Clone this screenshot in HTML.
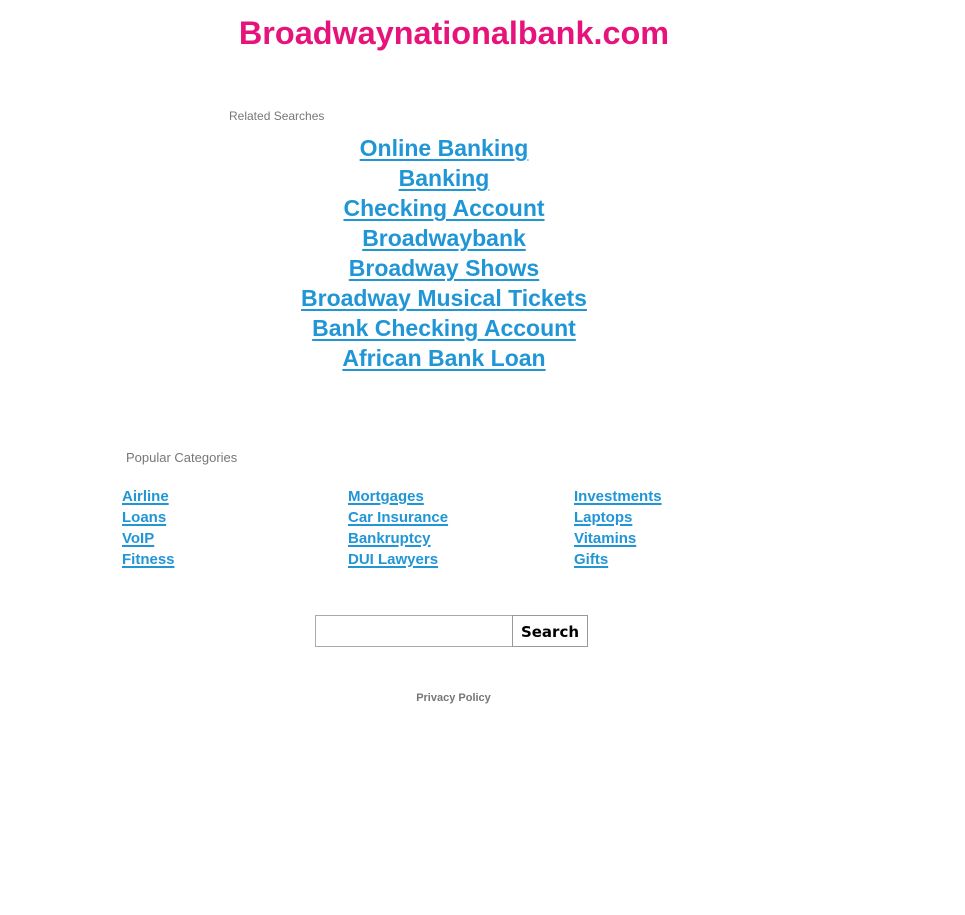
<!DOCTYPE html>
<html><head><meta charset="utf-8"><style>
body{margin:0;background:#fff;font-family:"Liberation Sans",Arial,sans-serif;width:965px;height:915px;position:relative;overflow:hidden}
.a{position:absolute}
h1{position:absolute;left:0;width:908px;top:14px;margin:0;text-align:center;color:#e6137b;font-size:32.4px;font-weight:bold;line-height:38px}
.rs{left:229px;top:109px;font-size:12px;color:#777}
.links{left:0;width:888px;top:133px;text-align:center}
.links a{display:block;font-size:23px;font-weight:bold;color:#2196d6;line-height:30px;text-decoration:underline;text-decoration-thickness:2px;text-underline-offset:3px}
.pc{left:126px;top:450px;font-size:13px;color:#777}
.col{top:486px;font-size:15px;font-weight:bold;line-height:21px}
.col a{display:block;color:#2196d6;text-decoration:underline;text-decoration-thickness:2px;text-underline-offset:2px}
.inp{left:315px;top:615px;width:196px;height:30px;border:1px solid #aaa}
.btn{left:512px;top:615px;width:74px;height:30px;border:1px solid #999;font-family:"DejaVu Sans",sans-serif;font-weight:bold;font-size:15px;line-height:32px;text-align:center;color:#000}
.pp{left:0;width:907px;top:692px;text-align:center;font-size:11px;font-weight:bold;color:#777}
</style></head><body>
<h1>Broadwaynationalbank.com</h1>
<div class="a rs">Related Searches</div>
<div class="a links">
<a>Online Banking</a><a>Banking</a><a>Checking Account</a><a>Broadwaybank</a><a>Broadway Shows</a><a>Broadway Musical Tickets</a><a>Bank Checking Account</a><a>African Bank Loan</a>
</div>
<div class="a pc">Popular Categories</div>
<div class="a col" style="left:122px"><a>Airline</a><a>Loans</a><a>VoIP</a><a>Fitness</a></div>
<div class="a col" style="left:348px"><a>Mortgages</a><a>Car Insurance</a><a>Bankruptcy</a><a>DUI Lawyers</a></div>
<div class="a col" style="left:574px"><a>Investments</a><a>Laptops</a><a>Vitamins</a><a>Gifts</a></div>
<div class="a inp"></div>
<div class="a btn">Search</div>
<div class="a pp">Privacy Policy</div>
</body></html>
